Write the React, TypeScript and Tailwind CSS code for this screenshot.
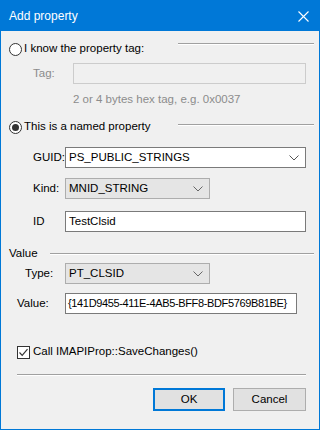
import React from "react";

const Chevron = ({ color }: { color: string }) => (
  <svg width="10" height="6" viewBox="0 0 10 6" fill="none">
    <path d="M0.5 0.5 L5 5 L9.5 0.5" stroke={color} strokeWidth="1" />
  </svg>
);

const Radio = ({ checked }: { checked?: boolean }) => (
  <span className="w-[13px] h-[13px] rounded-full border border-[#333] bg-white flex items-center justify-center shrink-0">
    {checked && <span className="w-[7px] h-[7px] rounded-full bg-[#333]" />}
  </span>
);

const Line = ({ className }: { className: string }) => (
  <div className={className}>
    <div className="h-px bg-[#a0a0a0]" />
    <div className="h-px bg-white" />
  </div>
);

const App = () => {
  return (
    <div
      className="w-[320px] h-[430px] bg-[#f0f0f0] border border-[#0078d7] flex flex-col text-[11.5px] text-black overflow-hidden whitespace-nowrap"
      style={{ fontFamily: '"Liberation Sans", Arial, sans-serif' }}
    >
      {/* title bar */}
      <div className="h-[30px] bg-[#0078d7] flex items-center justify-between pl-[8px] pr-[10px] text-white shrink-0">
        <span className="text-[12px] leading-none">Add property</span>
        <svg width="11" height="11" viewBox="0 0 11 11">
          <path d="M0.5 0.5 L10.5 10.5 M10.5 0.5 L0.5 10.5" stroke="white" strokeWidth="1.1" />
        </svg>
      </div>

      {/* tag radio */}
      <div className="mt-[10px] h-[16px] flex items-center pl-[8px]">
        <Radio />
        <span className="ml-[2px] leading-none">I know the property tag:</span>
        <Line className="ml-auto self-start mt-[2px] w-[136px] mr-[5px]" />
      </div>

      <div className="mt-[6px] h-[21px] flex items-center">
        <span className="ml-[32px] w-[40px] text-[#8c8c8c]">Tag:</span>
        <div className="w-[233px] h-[21px] border border-[#cccccc] bg-[#f0f0f0]" />
      </div>
      <div className="mt-[8px] h-[16px] flex items-center pl-[72px] text-[#8c8c8c]">
        2 or 4 bytes hex tag, e.g. 0x0037
      </div>

      {/* named property radio */}
      <div className="mt-[11px] h-[16px] flex items-center pl-[8px]">
        <Radio checked />
        <span className="ml-[2px] leading-none">This is a named property</span>
        <Line className="ml-auto self-start mt-[5px] w-[136px] mr-[5px]" />
      </div>

      <div className="mt-[12px] h-[21px] flex items-center">
        <span className="ml-[32px] w-[32px]">GUID:</span>
        <div className="w-[241px] h-[21px] border border-[#7a7a7a] bg-white flex items-center justify-between pl-[3px] pr-[6px]">
          <span>PS_PUBLIC_STRINGS</span>
          <Chevron color="#555" />
        </div>
      </div>

      <div className="mt-[10px] h-[21px] flex items-center">
        <span className="ml-[32px] w-[32px]">Kind:</span>
        <div className="w-[145px] h-[21px] border border-[#adadad] bg-[#e5e5e5] flex items-center justify-between pl-[3px] pr-[6px]">
          <span>MNID_STRING</span>
          <Chevron color="#666" />
        </div>
      </div>

      <div className="mt-[12px] h-[21px] flex items-center">
        <span className="ml-[32px] w-[32px]">ID</span>
        <div className="w-[241px] h-[21px] border border-[#7a7a7a] bg-white flex items-center pl-[3px]">
          TestClsid
        </div>
      </div>

      {/* value group */}
      <div className="mt-[14px] h-[16px] flex items-center pl-[8px]">
        <span className="leading-none">Value</span>
        <Line className="ml-auto self-start mt-[7px] w-[264px] mr-[5px]" />
      </div>

      <div className="mt-[1px] h-[21px] flex items-center">
        <span className="ml-[24px] w-[40px]">Type:</span>
        <div className="w-[145px] h-[21px] border border-[#adadad] bg-[#e5e5e5] flex items-center justify-between pl-[3px] pr-[6px]">
          <span>PT_CLSID</span>
          <Chevron color="#666" />
        </div>
      </div>

      <div className="mt-[9px] h-[21px] flex items-center">
        <span className="ml-[16px] w-[48px]">Value:</span>
        <div className="w-[232px] h-[21px] border border-[#7a7a7a] bg-white flex items-center pl-[2px] text-[11px] tracking-[-0.35px]">
          {"{141D9455-411E-4AB5-BFF8-BDF5769B81BE}"}
        </div>
      </div>

      {/* save changes */}
      <div className="mt-[30px] h-[16px] flex items-center pl-[16px]">
        <span className="w-[13px] h-[13px] border border-[#333] bg-white flex items-center justify-center shrink-0">
          <svg width="11" height="11" viewBox="0 0 11 11" fill="none">
            <path d="M1.5 5.5 L4.2 8.3 L9.5 2.2" stroke="#333" strokeWidth="1.2" />
          </svg>
        </span>
        <span className="ml-[3px] leading-none">Call IMAPIProp::SaveChanges()</span>
      </div>

      <Line className="mt-[14px] ml-[16px] w-[289px]" />

      <div className="mt-[12px] flex gap-[8px] pl-[152px]">
        <button className="w-[72px] h-[23px] border-2 border-[#0078d7] bg-[#e1e1e1] flex items-center justify-center">
          OK
        </button>
        <button className="w-[73px] h-[23px] border border-[#adadad] bg-[#e1e1e1] flex items-center justify-center">
          Cancel
        </button>
      </div>
    </div>
  );
};

export default App;
